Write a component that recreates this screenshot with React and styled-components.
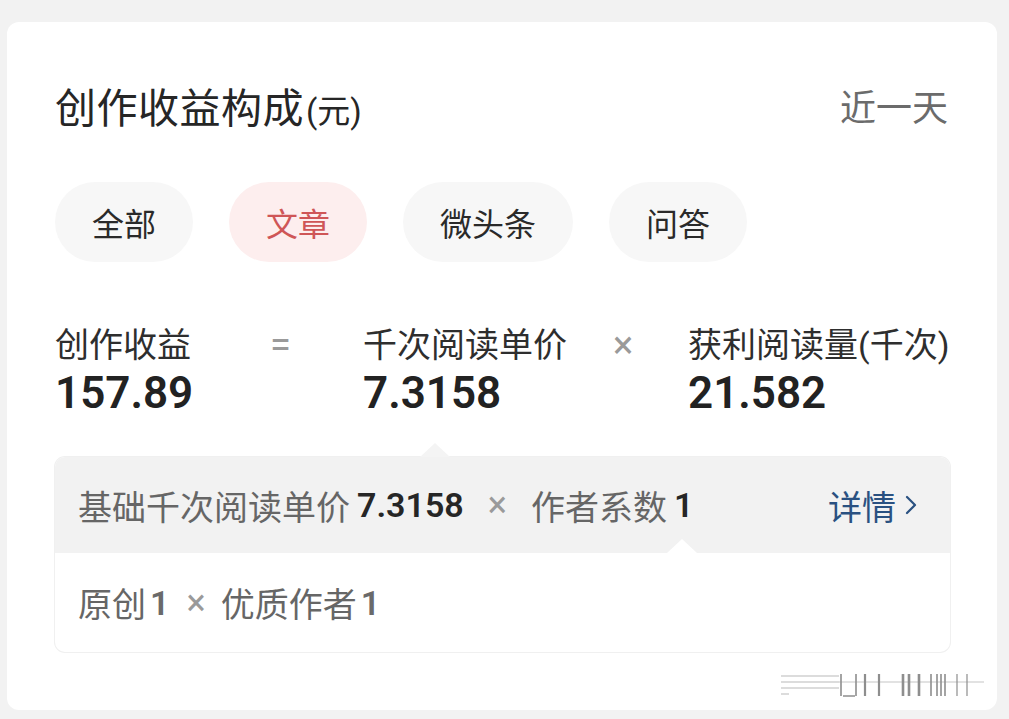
import React from 'react'
import styled, { createGlobalStyle } from 'styled-components'

const GlobalStyle = createGlobalStyle`
  html, body {
    margin: 0;
    padding: 0;
    background: #f2f2f2;
  }
  body {
    font-family: Roboto, "Noto Sans CJK SC", sans-serif;
    color: #222;
  }
`;

const Page = styled.div`
  padding: 22px 12px 9px 7px;
`;

const Card = styled.div`
  position: relative;
  width: 990px;
  height: 688px;
  box-sizing: border-box;
  padding: 56px 47px 0 48px;
  background: #fff;
  border-radius: 12px;
`;

const Header = styled.div`
  display: flex;
  align-items: center;
  justify-content: space-between;
  height: 54px;
`;

const Title = styled.div`
  font-size: 41px;
  color: #262626;
  letter-spacing: 0.5px;
`;

const TitleUnit = styled.span`
  font-size: 33px;
  letter-spacing: 0;
  margin-left: 2px;
`;

const Range = styled.div`
  font-size: 36px;
  color: #6b6b6b;
  padding-right: 2px;
`;

const Tabs = styled.div`
  display: flex;
  gap: 36px;
  margin-top: 50px;
`;

const Tab = styled.div`
  height: 80px;
  padding: 0 37px;
  display: flex;
  align-items: center;
  border-radius: 40px;
  font-size: 32px;
  color: ${p => (p.$active ? '#cf5657' : '#2a2a2a')};
  background: ${p => (p.$active ? '#fdeeee' : '#f7f7f7')};
`;

const Formula = styled.div`
  display: grid;
  grid-template-columns: 215px 93px 250px 75px 1fr;
  margin-top: 61px;
`;

const Term = styled.div`
  display: flex;
  flex-direction: column;
`;

const Label = styled.div`
  font-size: 34px;
  line-height: 44px;
  color: #2e2e2e;
  white-space: nowrap;
`;

const Value = styled.div`
  font-size: 44px;
  line-height: 52px;
  font-weight: 600;
  color: #222;
`;

const Operator = styled.div`
  font-size: 38px;
  line-height: 44px;
  color: #9a9a9a;
`;

const Breakdown = styled.div`
  position: relative;
  margin-top: 38px;
  border-radius: 10px;
  background: #fff;
  box-shadow: 0 0 0 1px #f0f0f0;
`;

const BreakdownHead = styled.div`
  position: relative;
  display: flex;
  align-items: center;
  height: 96px;
  padding: 0 32px 0 23px;
  background: #f2f2f2;
  border-radius: 10px 10px 0 0;
  font-size: 34px;
  color: #666;
`;

const UpArrow = styled.div`
  position: absolute;
  top: -14px;
  left: ${p => p.$left}px;
  width: 0;
  height: 0;
  border-left: 15px solid transparent;
  border-right: 15px solid transparent;
  border-bottom: 14px solid ${p => p.$color};
`;

const Num = styled.span`
  font-weight: 600;
  margin-left: ${p => (p.$muted ? 4 : 7)}px;
  color: ${p => (p.$muted ? '#6a6a6a' : '#262626')};
`;

const Times = styled.span`
  color: #9a9a9a;
  margin: 0 24px;
  font-size: 36px;
`;

const SmallTimes = styled(Times)`
  margin: 0 15px 0 17px;
`;

const Detail = styled.a`
  margin-left: auto;
  display: flex;
  align-items: center;
  gap: 8px;
  color: #2a5181;
  font-size: 34px;
  text-decoration: none;
`;

const BreakdownBody = styled.div`
  display: flex;
  align-items: center;
  height: 99px;
  padding: 0 23px;
  font-size: 34px;
  color: #666;
`;

const Mark = styled.svg`
  position: absolute;
  right: 8px;
  bottom: 10px;
`;

const tabs = ['全部', '文章', '微头条', '问答']

export default function App() {
  return (
    <Page>
      <GlobalStyle />
      <Card>
        <Header>
          <Title>
            创作收益构成<TitleUnit>(元)</TitleUnit>
          </Title>
          <Range>近一天</Range>
        </Header>

        <Tabs>
          {tabs.map(t => (
            <Tab key={t} $active={t === '文章'}>{t}</Tab>
          ))}
        </Tabs>

        <Formula>
          <Term>
            <Label>创作收益</Label>
            <Value>157.89</Value>
          </Term>
          <Operator>=</Operator>
          <Term>
            <Label>千次阅读单价</Label>
            <Value>7.3158</Value>
          </Term>
          <Operator>×</Operator>
          <Term>
            <Label>获利阅读量(千次)</Label>
            <Value>21.582</Value>
          </Term>
        </Formula>

        <Breakdown>
          <UpArrow $left={365} $color="#f4f4f4" />
          <BreakdownHead>
            基础千次阅读单价<Num>7.3158</Num>
            <Times>×</Times>
            作者系数<Num>1</Num>
            <Detail href="#">
              详情
              <svg width="14" height="24" viewBox="0 0 14 24">
                <path d="M3 4l8 8-8 8" fill="none" stroke="#2a5181" strokeWidth="2.2" strokeLinecap="round" strokeLinejoin="round" />
              </svg>
            </Detail>
            <UpArrow style={{ top: 'auto', bottom: 0 }} $left={612} $color="#fff" />
          </BreakdownHead>
          <BreakdownBody>
            原创<Num $muted>1</Num>
            <SmallTimes>×</SmallTimes>
            优质作者<Num $muted>1</Num>
          </BreakdownBody>
        </Breakdown>

        <Mark width="210" height="30" viewBox="0 0 210 30">
          <g stroke="#333" opacity="0.55">
            <path d="M2 6h58M2 12h58M2 18h58M2 24h8" strokeWidth="1" opacity="0.6" />
            <path d="M60 12h145" strokeWidth="1" opacity="0.5" />
            <path d="M62 4v22M64 26h12M77 4v22" strokeWidth="1.6" />
            <path d="M86 4v22M100 4v22" strokeWidth="2.2" />
            <path d="M124 4v22M130 4v22M140 4v22" strokeWidth="2.6" />
            <path d="M152 4v22M158 4v22M162 4v22M166 4v22" strokeWidth="1.6" />
            <path d="M178 4v22M188 4v22" strokeWidth="1.2" />
          </g>
        </Mark>
      </Card>
    </Page>
  )
}
